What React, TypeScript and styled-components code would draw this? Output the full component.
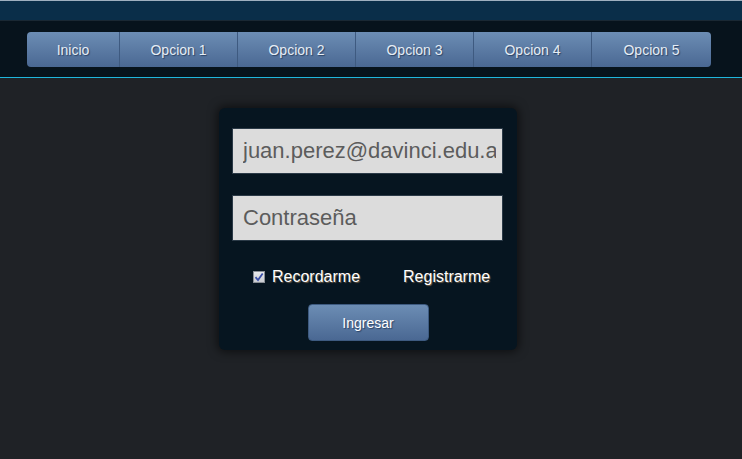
import React from "react";
import styled, { createGlobalStyle } from "styled-components";

const Global = createGlobalStyle`
  html, body { margin: 0; padding: 0; background: #1f2226; }
  body { font-family: "Liberation Sans", Arial, sans-serif; min-height: 459px; }
  * { box-sizing: border-box; }
`;

const TopBand = styled.div`
  height: 21px;
  background: #0a2e49;
  border-top: 1px solid #9fb0c0;
  border-bottom: 1px solid #1a2833;
`;

const NavArea = styled.header`
  background: #07131c;
  padding: 11px 0 10px 27px;
  border-bottom: 1px solid #1fb6dc;
`;

const Nav = styled.nav`
  display: flex;
  width: 684px;
  height: 35px;
  border-radius: 4px;
  overflow: hidden;
  background: linear-gradient(#6c8db4, #4a6893);
`;

const NavItem = styled.a<{ $w: number; $first?: boolean }>`
  width: ${(p) => p.$w}px;
  display: flex;
  align-items: center;
  justify-content: center;
  font-size: 14px;
  color: #e6edf5;
  text-shadow: 1px 1px 1px #2c4466;
  border-left: ${(p) => (p.$first ? "none" : "1px solid #3e5a80")};
  text-decoration: none;
`;

const Main = styled.main`
  display: flex;
  justify-content: center;
  padding: 30px 6px 0 0;
`;

const Card = styled.form`
  width: 298px;
  background: #061520;
  border-radius: 6px;
  box-shadow: 0 0 10px 2px rgba(0, 0, 0, 0.55);
  padding: 20px 14px 9px 13px;
  display: flex;
  flex-direction: column;
`;

const Field = styled.input`
  width: 271px;
  height: 46px;
  background: #dcdcdc;
  border: 1px solid #2b3a47;
  padding: 0 6px 0 10px;
  font-family: "Liberation Sans", Arial, sans-serif;
  font-size: 22px;
  color: #5c5c5c;
  outline: none;
  & + & { margin-top: 21px; }
  &::placeholder { color: #5c5c5c; opacity: 1; }
`;

const OptionsRow = styled.div`
  display: flex;
  align-items: center;
  margin-top: 27px;
  padding-left: 21px;
  height: 18px;
`;

const Check = styled.span`
  width: 12px;
  height: 12px;
  border: 1px solid #8a8f96;
  background: linear-gradient(#e8eaed, #c9ccd1);
  display: flex;
  align-items: center;
  justify-content: center;
  margin-right: 7px;
`;

const Label = styled.span<{ $gap?: number }>`
  font-size: 16px;
  color: #ffffff;
  text-shadow: 1px 1px 1px #6e5c48;
  margin-left: ${(p) => p.$gap ?? 0}px;
`;

const Submit = styled.button`
  align-self: center;
  margin: 18px 0 0 1px;
  width: 121px;
  height: 37px;
  border: 1px solid #3d5a80;
  border-radius: 4px;
  background: linear-gradient(#6c8db4, #4a6893);
  color: #ffffff;
  font-family: "Liberation Sans", Arial, sans-serif;
  font-size: 14px;
  text-shadow: 1px 1px 1px #2c4466;
`;

const items = [
  { t: "Inicio", w: 92 },
  { t: "Opcion 1", w: 118 },
  { t: "Opcion 2", w: 118 },
  { t: "Opcion 3", w: 118 },
  { t: "Opcion 4", w: 118 },
  { t: "Opcion 5", w: 120 },
];

export default function App() {
  return (
    <>
      <Global />
      <TopBand />
      <NavArea>
        <Nav>
          {items.map((it, i) => (
            <NavItem key={it.t} $w={it.w} $first={i === 0}>
              {it.t}
            </NavItem>
          ))}
        </Nav>
      </NavArea>
      <Main>
        <Card onSubmit={(e) => e.preventDefault()}>
          <Field type="text" defaultValue="juan.perez@davinci.edu.ar" readOnly />
          <Field type="password" placeholder="Contraseña" />
          <OptionsRow>
            <Check>
              <svg width="10" height="10" viewBox="0 0 10 10">
                <path d="M1.5 5.2 L4 8 L8.7 1.5" fill="none" stroke="#3a4fa8" strokeWidth="1.8" />
              </svg>
            </Check>
            <Label>Recordarme</Label>
            <Label $gap={43}>Registrarme</Label>
          </OptionsRow>
          <Submit type="submit">Ingresar</Submit>
        </Card>
      </Main>
    </>
  );
}
